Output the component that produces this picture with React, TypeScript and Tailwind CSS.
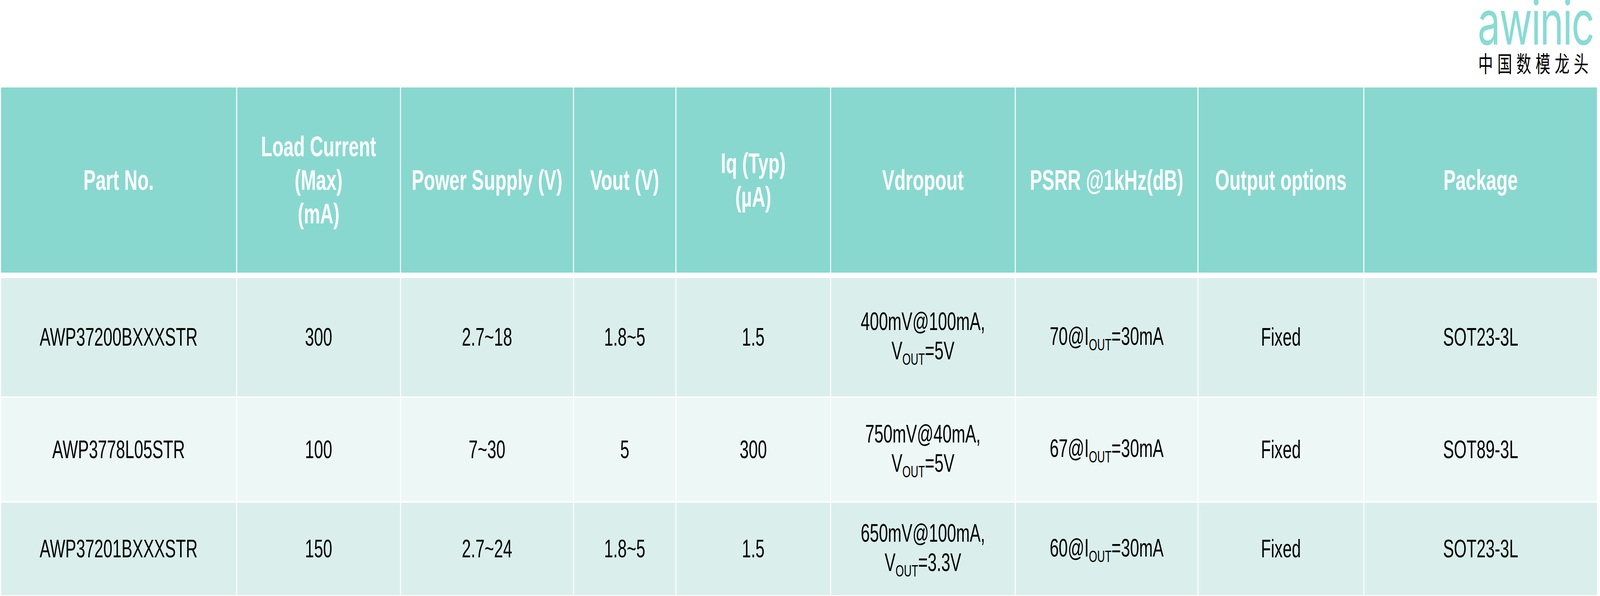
import React, { useEffect, useState } from 'react';

interface Row {
  part: string;
  load: string;
  supply: string;
  vout: string;
  iq: string;
  drop: string;
  dropVout: string;
  psrr: string;
  output: string;
  pkg: string;
  rowClass: string;
}

const rows: Row[] = [
  {
    part: 'AWP37200BXXXSTR',
    load: '300',
    supply: '2.7~18',
    vout: '1.8~5',
    iq: '1.5',
    drop: '400mV@100mA,',
    dropVout: '5V',
    psrr: '70',
    output: 'Fixed',
    pkg: 'SOT23-3L',
    rowClass: 'h-[303px] bg-[#daefec]',
  },
  {
    part: 'AWP3778L05STR',
    load: '100',
    supply: '7~30',
    vout: '5',
    iq: '300',
    drop: '750mV@40mA,',
    dropVout: '5V',
    psrr: '67',
    output: 'Fixed',
    pkg: 'SOT89-3L',
    rowClass: 'h-[264px] bg-[#edf7f6]',
  },
  {
    part: 'AWP37201BXXXSTR',
    load: '150',
    supply: '2.7~24',
    vout: '1.8~5',
    iq: '1.5',
    drop: '650mV@100mA,',
    dropVout: '3.3V',
    psrr: '60',
    output: 'Fixed',
    pkg: 'SOT23-3L',
    rowClass: 'h-[237px] bg-[#daefec]',
  },
];

const DESIGN_W = 6280;

const cols = 'grid grid-cols-[923px_639px_675px_398px_603px_721px_713px_647px_913px] gap-x-[4px]';

const Sub = ({ children }: { children: React.ReactNode }) => (
  <span className="text-[42px] leading-none align-[-14px]">{children}</span>
);

const HeadCell = ({ children }: { children: React.ReactNode }) => (
  <div className="flex h-[474px] items-center justify-center bg-[#88d8d0] text-center">
    <div className="whitespace-nowrap text-[72px] font-bold leading-[86px] text-white">{children}</div>
  </div>
);

const Cell = ({ children, rowClass }: { children: React.ReactNode; rowClass: string }) => (
  <div className={`flex items-center justify-center text-center ${rowClass}`}>
    <div className="whitespace-nowrap text-[64px] leading-[75px] text-black">{children}</div>
  </div>
);

// the sheet is drawn at 6280px; squeeze it horizontally if the window is narrower
const useFit = () => {
  const get = () => (typeof window === 'undefined' ? 1 : Math.min(1, window.innerWidth / DESIGN_W));
  const [sx, setSx] = useState(get);
  useEffect(() => {
    const onResize = () => setSx(get());
    window.addEventListener('resize', onResize);
    return () => window.removeEventListener('resize', onResize);
  }, []);
  return sx;
};

export default function App() {
  const sx = useFit();

  return (
    <div className="h-[1526px] w-screen overflow-hidden bg-white">
      <div
        className="h-[1526px] w-[6280px] origin-top-left bg-white font-['Liberation_Sans',Arial,sans-serif]"
        style={{ transform: `scaleX(${sx})` }}
      >
        <div className="flex h-[224px] justify-end pr-[29px]">
          <div className="flex w-[451px] flex-col">
            <div className="h-[114px] whitespace-nowrap font-['Inter',sans-serif] text-[158px] leading-[114px] tracking-[-4px] text-[#88dbd4]">
              awinic
            </div>
            <div className="mt-[19px] h-[54px] whitespace-nowrap pl-[2px] font-['Noto_Sans_CJK_SC',sans-serif] text-[58px] leading-[54px] tracking-[17px] text-black">
              中国数模龙头
            </div>
          </div>
        </div>

        <div className="ml-[4px] flex flex-col">
          <div className={cols}>
            <HeadCell>Part No.</HeadCell>
            <HeadCell>
              Load Current
              <br />
              (Max)
              <br />
              (mA)
            </HeadCell>
            <HeadCell>Power Supply (V)</HeadCell>
            <HeadCell>Vout (V)</HeadCell>
            <HeadCell>
              Iq (Typ)
              <br />
              (µA)
            </HeadCell>
            <HeadCell>Vdropout</HeadCell>
            <HeadCell>PSRR @1kHz(dB)</HeadCell>
            <HeadCell>Output options</HeadCell>
            <HeadCell>Package</HeadCell>
          </div>

          <div className="mt-[14px] flex flex-col gap-y-[4px]">
            {rows.map((r) => (
              <div key={r.part} className={cols}>
                <Cell rowClass={r.rowClass}>{r.part}</Cell>
                <Cell rowClass={r.rowClass}>{r.load}</Cell>
                <Cell rowClass={r.rowClass}>{r.supply}</Cell>
                <Cell rowClass={r.rowClass}>{r.vout}</Cell>
                <Cell rowClass={r.rowClass}>{r.iq}</Cell>
                <Cell rowClass={r.rowClass}>
                  {r.drop}
                  <br />
                  V<Sub>OUT</Sub>={r.dropVout}
                </Cell>
                <Cell rowClass={r.rowClass}>
                  {r.psrr}@I<Sub>OUT</Sub>=30mA
                </Cell>
                <Cell rowClass={r.rowClass}>{r.output}</Cell>
                <Cell rowClass={r.rowClass}>{r.pkg}</Cell>
              </div>
            ))}
          </div>
        </div>
      </div>
    </div>
  );
}
